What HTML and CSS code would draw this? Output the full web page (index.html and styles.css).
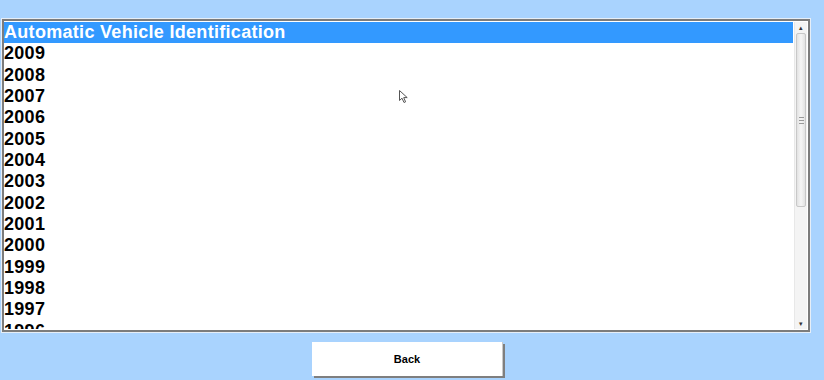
FILE: index.html
```html
<!DOCTYPE html>
<html lang="en">
<head>
    <meta charset="UTF-8">
    <title>Vehicle Selection</title>
    <link rel="stylesheet" href="styles.css">
</head>
<body>
    <div class="list-box">
        <div class="list-items">
            <div class="item selected">Automatic Vehicle Identification</div>
            <div class="item">2009</div>
            <div class="item">2008</div>
            <div class="item">2007</div>
            <div class="item">2006</div>
            <div class="item">2005</div>
            <div class="item">2004</div>
            <div class="item">2003</div>
            <div class="item">2002</div>
            <div class="item">2001</div>
            <div class="item">2000</div>
            <div class="item">1999</div>
            <div class="item">1998</div>
            <div class="item">1997</div>
            <div class="item">1996</div>
        </div>
        <div class="scrollbar">
            <div class="arrow">&#9652;</div>
            <div class="track">
                <div class="thumb"><span class="grip"></span></div>
            </div>
            <div class="arrow">&#9662;</div>
        </div>
        <!-- mouse pointer -->
        <svg class="cursor" width="10" height="14" viewBox="0 0 10 14">
            <path d="M0.5 0.5 L0.5 10.5 L3 8.2 L5 12.5 L6.6 11.8 L4.7 7.6 L8.2 7.6 Z" fill="#fff" stroke="#555" stroke-width="1"/>
        </svg>
    </div>

    <div class="actions">
        <button class="btn">Back</button>
    </div>
</body>
</html>
```

FILE: styles.css
```css
/* General Styles */
body {
    margin: 0;
    background-color: #a9d3fe;
    font-family: "Liberation Sans", Arial, sans-serif;
    width: 824px;
    height: 380px;
    overflow: hidden;
}

/* List Box */
.list-box {
    position: relative;
    display: flex;
    margin: 19px 0 0 2px;
    width: 803px;
    height: 307px;
    background-color: #fff;
    border: 2px solid #7c7c7c;
    box-shadow: 0 0 0 1px #e6eef7;
    padding: 1px 1px 1px 0;
}

.list-items {
    flex: 1;
    overflow: hidden;
}

.item {
    height: 21.33px;
    line-height: 20px;
    font-size: 18px;
    letter-spacing: 0.3px;
    font-weight: bold;
    color: #000;
    padding-left: 0;
    white-space: nowrap;
}

.item.selected {
    background-color: #3399ff;
    color: #fff;
    margin-right: 1px;
}

/* Scrollbar */
.scrollbar {
    width: 12px;
    display: flex;
    flex-direction: column;
    background-color: #f4f4f4;
    border-left: 1px solid #e8e8e8;
}

.arrow {
    height: 11px;
    font-size: 7px;
    line-height: 11px;
    text-align: center;
    color: #333;
}

.track {
    flex: 1;
    padding: 0 1px;
}

.thumb {
    height: 172px;
    background: linear-gradient(to right, #e2e2e2, #f6f6f6 50%, #e2e2e2);
    border: 1px solid #c8c8c8;
    border-radius: 2px;
    display: flex;
    align-items: center;
    justify-content: center;
}

.grip {
    width: 5px;
    height: 5px;
    border-top: 1px solid #999;
    border-bottom: 1px solid #999;
    background: linear-gradient(#999, #999) center / 5px 1px no-repeat;
}

.cursor {
    position: absolute;
    left: 395px;
    top: 69px;
}

/* Buttons */
.actions {
    display: flex;
    justify-content: center;
    padding-top: 10px;
    padding-right: 9px;
}

.btn {
    width: 191px;
    height: 34px;
    background-color: #fff;
    border: none;
    border-right: 1px solid #c8c8c8;
    box-shadow: 2px 2px 0 #7f7f7f;
    font-family: "Liberation Sans", Arial, sans-serif;
    font-size: 11px;
    font-weight: bold;
    color: #000;
    cursor: pointer;
}
```
